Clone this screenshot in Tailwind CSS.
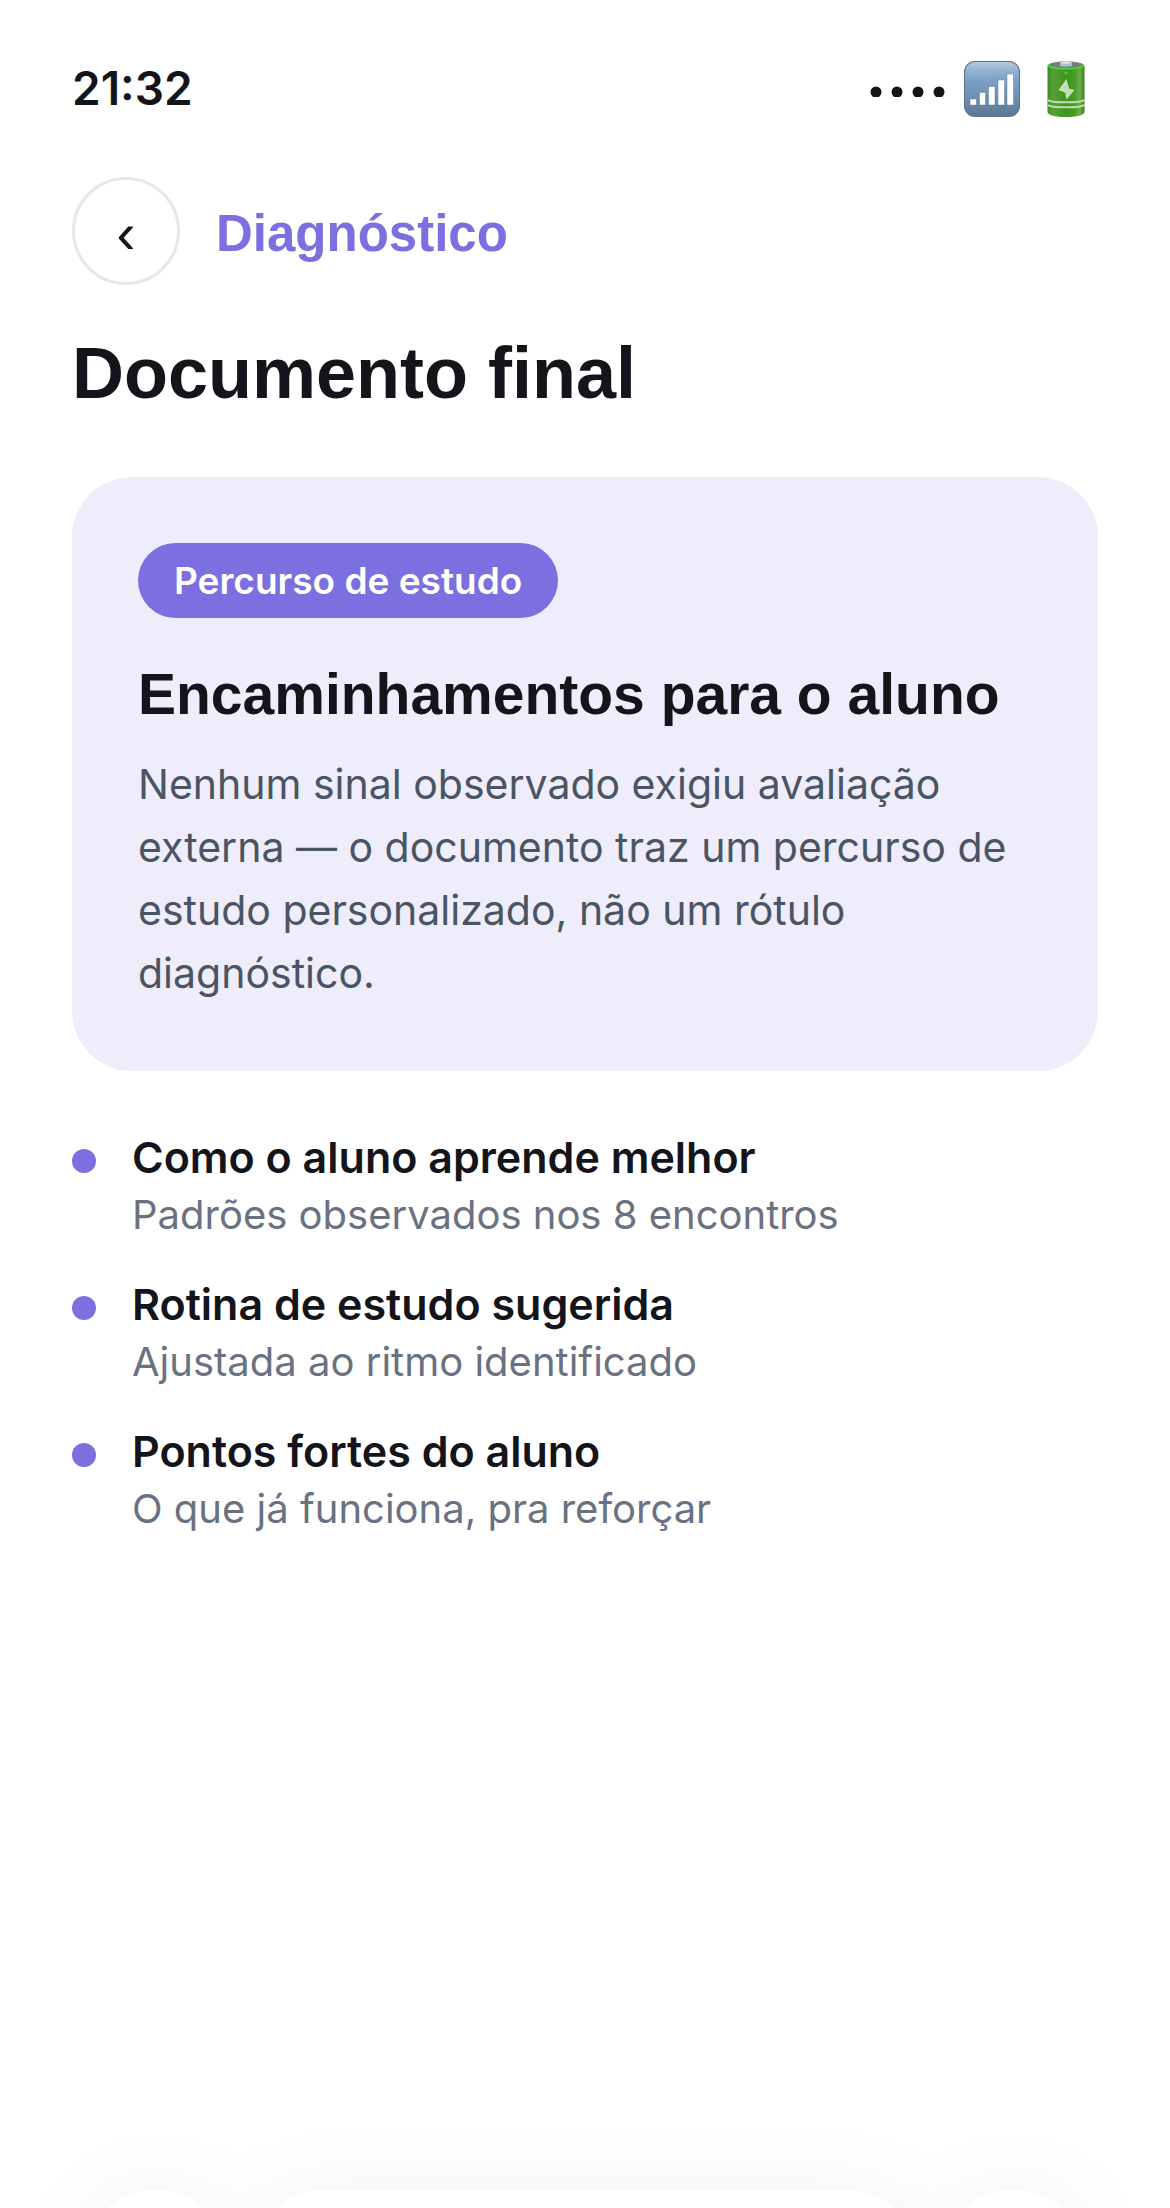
<!DOCTYPE html>
<html lang="pt-BR">
<head>
    <meta charset="UTF-8">
    <meta name="viewport" content="width=device-width, initial-scale=1.0">
    <title>Documento final</title>
    <script src="https://cdn.jsdelivr.net/npm/@tailwindcss/browser@4"></script>
</head>
<body class="bg-white text-[#14151a] font-['Inter',sans-serif] min-h-screen overflow-hidden">
    <!-- Status bar -->
    <header class="flex items-center justify-between pl-[72px] pr-[76px] pt-[54px] h-[123px]">
        <span class="text-[46px] font-semibold leading-[69px]">21:32</span>
        <div class="flex items-center">
            <svg class="w-[76px] h-[16px] mr-[18px]" viewBox="0 0 76 16" fill="#14151a">
                <circle cx="6" cy="11" r="5.5"/><circle cx="27" cy="11" r="5.5"/><circle cx="48" cy="11" r="5.5"/><circle cx="69" cy="11" r="5.5"/>
            </svg>
            <!-- Signal -->
            <svg class="size-14 mr-[18px]" viewBox="0 0 56 56">
                <defs>
                    <linearGradient id="signalBg" x1="0" y1="0" x2="0" y2="1">
                        <stop offset="0" stop-color="#b3cbe0"/>
                        <stop offset=".16" stop-color="#93b3d1"/>
                        <stop offset=".35" stop-color="#7b9fc6"/>
                        <stop offset=".65" stop-color="#6f8fb0"/>
                        <stop offset="1" stop-color="#5c7893"/>
                    </linearGradient>
                </defs>
                <rect width="56" height="56" rx="11" fill="#58748f"/>
                <rect x="1" y="1" width="54" height="54" rx="10" fill="url(#signalBg)"/>
                <g fill="#fff" stroke="#5f7f9f" stroke-width=".5">
                    <rect x="6" y="38" width="6.500" height="6"/>
                    <rect x="15.500" y="31.500" width="6" height="12.500"/>
                    <rect x="24.500" y="25.500" width="6.500" height="18.500"/>
                    <rect x="34" y="19" width="6.500" height="25"/>
                    <rect x="43" y="13" width="6.500" height="31"/>
                </g>
            </svg>
            <!-- Battery -->
            <svg class="size-14" viewBox="0 0 56 56">
                <defs>
                    <linearGradient id="batteryBody" x1="0" y1="0" x2="1" y2="0">
                        <stop offset="0" stop-color="#3f8a22"/>
                        <stop offset=".15" stop-color="#57a035"/>
                        <stop offset=".5" stop-color="#3f9420"/>
                        <stop offset=".72" stop-color="#469c24"/>
                        <stop offset=".88" stop-color="#6cae48"/>
                        <stop offset="1" stop-color="#377c1c"/>
                    </linearGradient>
                </defs>
                <path d="M9.500 5v46c0 3 8 5 18.500 5s18.500-2 18.500-5V5z" fill="url(#batteryBody)"/>
                <ellipse cx="28" cy="4.500" rx="18.500" ry="4" fill="#4bd83c"/>
                <ellipse cx="28" cy="3.800" rx="16.500" ry="3.200" fill="#777f70"/>
                <path d="M22 1.500v3c0 1.500 12 1.500 12 0v-3c0-2-12-2-12 0z" fill="#a9bfd6"/>
                <ellipse cx="28" cy="1.600" rx="5" ry="1.200" fill="#dce7f2"/>
                <path d="M28 10.500v3M26.500 12h3" stroke="#8fc477" stroke-width=".8"/>
                <path d="M28.500 18l2.500 9.500 5.500 1.500-8 9.500-1.500-7-6.500-2.500z" fill="#c5dfb9"/>
                <path d="M28 18l-7 11.500h7l3-2z" fill="#c5dfb9" opacity=".35"/>
                <path d="M9.500 39c3 3 34 3 37 0M9.500 44c3 3 34 3 37 0" fill="none" stroke="#bcd9ac" stroke-width="2"/>
            </svg>
        </div>
    </header>

    <main class="px-[72px] pt-[54px]">
        <div class="flex items-center gap-9">
            <button type="button" aria-label="Voltar" class="size-[108px] rounded-full border-[3px] border-slate-200 bg-white pt-1 text-[57px] leading-none font-['Liberation_Sans',sans-serif]">‹</button>
            <a href="#" class="pt-1.5 text-[51px] leading-[60px] font-bold text-[#7c6fe0] font-['Liberation_Sans',sans-serif]">Diagnóstico</a>
        </div>
        <h1 class="mt-[46px] text-[72px] leading-[84px] font-bold font-['Liberation_Sans',sans-serif]">Documento final</h1>

        <section class="mt-[62px] rounded-[60px] bg-[#efecfb] p-[66px]">
            <span class="inline-block rounded-full bg-[#7c6fe0] px-9 text-[37px] leading-[75px] font-semibold text-white align-top">Percurso de estudo</span>
            <h2 class="mt-[42px] text-[57px] leading-[69px] font-bold font-['Liberation_Sans',sans-serif]">Encaminhamentos para o aluno</h2>
            <p class="mt-6 text-[41px] leading-[63px] text-[#4a5563]">Nenhum sinal observado exigiu avaliação externa — o documento traz um percurso de estudo personalizado, não um rótulo diagnóstico.</p>
        </section>

        <ul class="mt-14 space-y-[31px]">
            <li class="flex gap-9">
                <span class="mt-[22px] size-6 shrink-0 rounded-full bg-[#7c6fe0]"></span>
                <div>
                    <h3 class="text-[43px] leading-[60px] font-semibold">Como o aluno aprende melhor</h3>
                    <p class="text-[40px] leading-[56px] text-gray-500">Padrões observados nos 8 encontros</p>
                </div>
            </li>
            <li class="flex gap-9">
                <span class="mt-[22px] size-6 shrink-0 rounded-full bg-[#7c6fe0]"></span>
                <div>
                    <h3 class="text-[43px] leading-[60px] font-semibold">Rotina de estudo sugerida</h3>
                    <p class="text-[40px] leading-[56px] text-gray-500">Ajustada ao ritmo identificado</p>
                </div>
            </li>
            <li class="flex gap-9">
                <span class="mt-[22px] size-6 shrink-0 rounded-full bg-[#7c6fe0]"></span>
                <div>
                    <h3 class="text-[43px] leading-[60px] font-semibold">Pontos fortes do aluno</h3>
                    <p class="text-[40px] leading-[56px] text-gray-500">O que já funciona, pra reforçar</p>
                </div>
            </li>
        </ul>
    </main>

    <!-- Floating toolbar, mostly below the fold -->
    <div class="fixed inset-x-0 bottom-0 h-[18px] flex gap-[18px] px-[81px] drop-shadow-[0_0_36px_rgba(0,0,0,0.05)]">
        <div class="size-[150px] shrink-0 rounded-full bg-white"></div>
        <div class="h-[150px] grow rounded-full bg-white"></div>
        <div class="size-[150px] shrink-0 rounded-full bg-white"></div>
    </div>
</body>
</html>
